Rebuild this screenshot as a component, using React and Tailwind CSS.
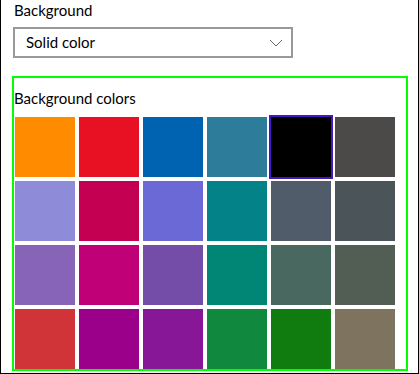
import React from "react";

const rows = [
  ["#FF8C00", "#E81123", "#0063B1", "#2D7D9A", "#000000", "#4C4A48"],
  ["#8E8CD8", "#C30052", "#6B69D6", "#038387", "#515C6B", "#4A5459"],
  ["#8764B8", "#BF0077", "#744DA9", "#018574", "#486860", "#525E54"],
  ["#D13438", "#9A0089", "#881798", "#10893E", "#107C10", "#7E735F"],
];

export default function App() {
  return (
    <div
      className="relative w-[419px] h-[374px] bg-white border-l border-r border-b border-black overflow-hidden text-black"
      style={{ fontFamily: 'Lato, "Open Sans", sans-serif' }}
    >
      <div className="pl-[13px] pt-[0px] text-[15px] leading-[20px]">Background</div>
      <div className="ml-[12px] mt-[7px] w-[280px] h-[31px] border-2 border-[#999999] flex items-center justify-between pl-[11px] pr-[8px]">
        <span className="text-[15px] leading-[20px] -mt-[1px]">Solid color</span>
        <svg width="14" height="8" viewBox="0 0 14 8" className="mt-[1px]">
          <path d="M1 1 L7 7 L13 1" fill="none" stroke="#666" strokeWidth="1" />
        </svg>
      </div>
      <div className="ml-[11px] mt-[18px] w-[396px] h-[295px] border-2 border-[#00ff00]">
        <div className="pl-[0px] pt-[10px] text-[15px] leading-[20px]">Background colors</div>
        <div className="mt-[9px] pl-[1px] grid grid-cols-[repeat(6,60px)] gap-[4px]">
          {rows.flat().map((c, i) => (
            <div key={i} className="relative w-[60px] h-[60px]" style={{ backgroundColor: c }}>
              {i === 4 && (
                <div className="absolute -inset-[2px] border-2 border-[#4616c4]" />
              )}
            </div>
          ))}
        </div>
      </div>
    </div>
  );
}
